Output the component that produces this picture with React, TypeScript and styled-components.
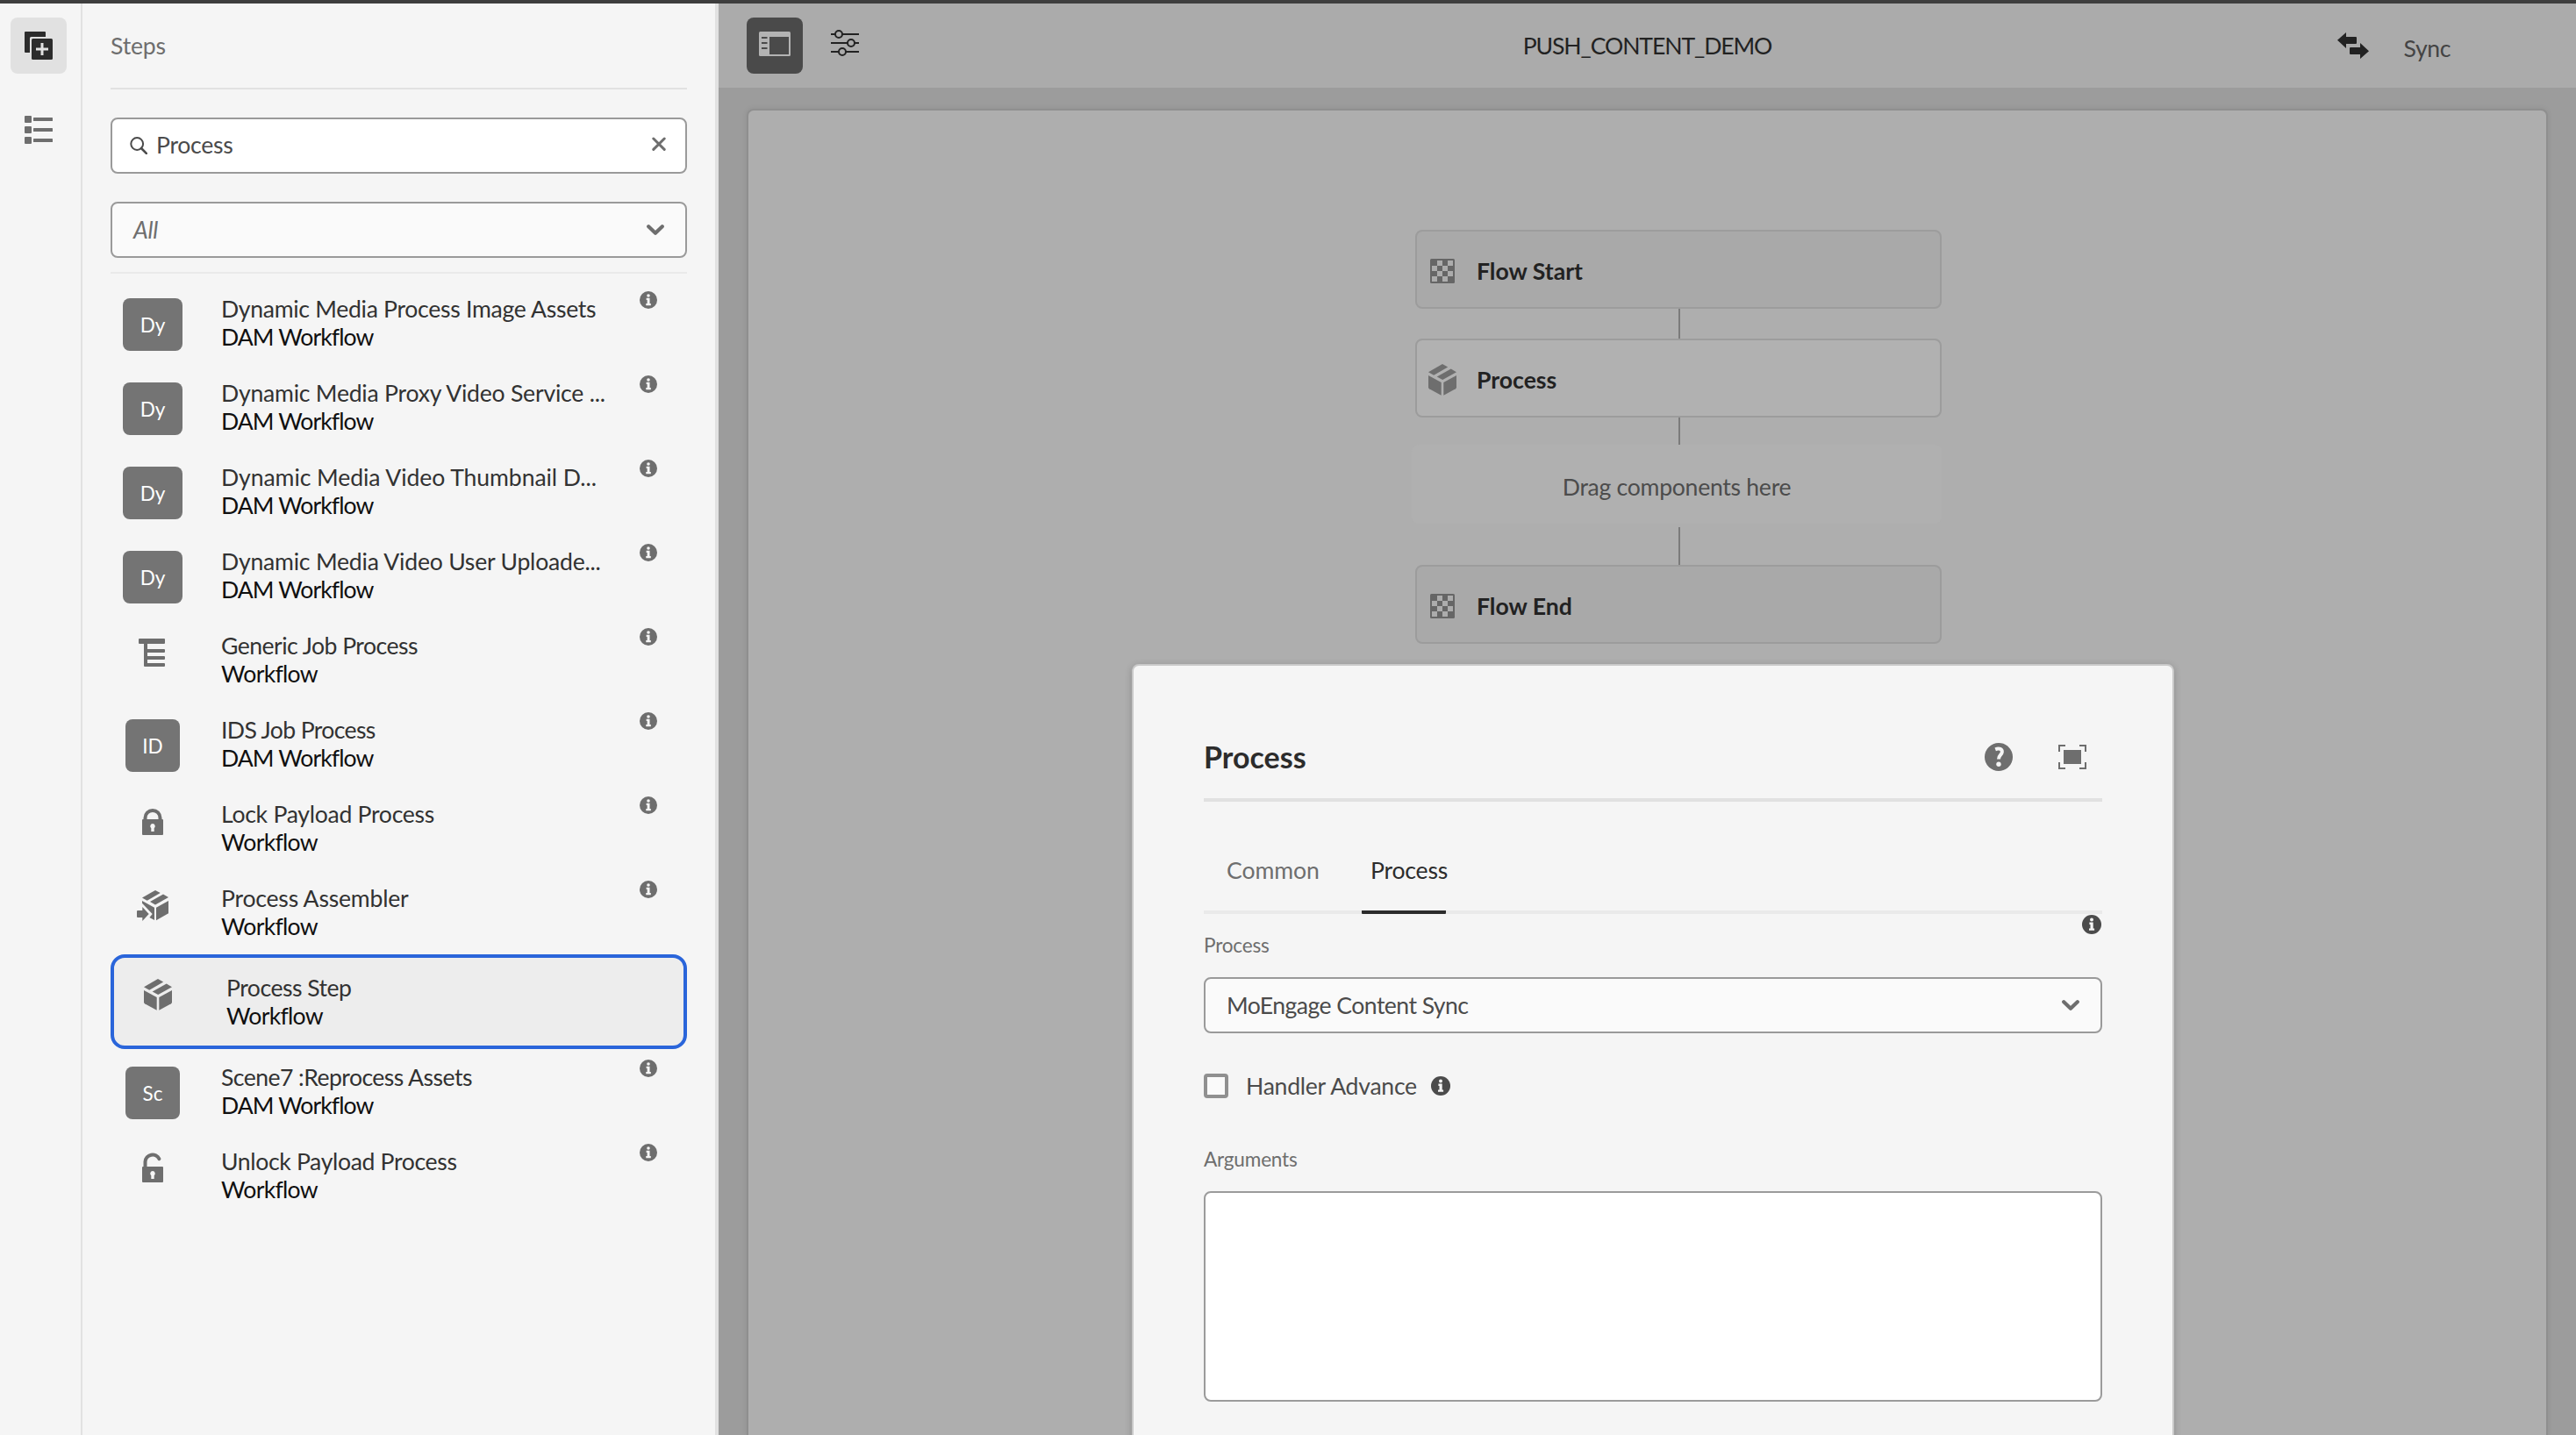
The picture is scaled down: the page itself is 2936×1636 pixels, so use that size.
import React from "react";
import styled, { createGlobalStyle, css } from "styled-components";

const GlobalStyle = createGlobalStyle`
  *, *::before, *::after { box-sizing: border-box; }
  html, body { margin: 0; padding: 0; }
  body {
    width: 2936px;
    height: 1636px;
    overflow: hidden;
    background: #f5f5f5;
    font-family: Lato, "Open Sans", sans-serif;
    font-size: 26.6px;
    line-height: 32px;
    color: #323232;
  }
`;

/* ---------- Shell ---------- */

const Shell = styled.div`
  position: relative;
  display: flex;
  width: 2936px;
  height: 1636px;
  overflow: hidden;
  border-top: 4px solid #3e3e3e;
  background: #f5f5f5;
`;

const Label = styled.span<{ $track?: number }>`
  white-space: nowrap;
  letter-spacing: ${(p) => p.$track ?? -0.2}px;
`;

const Icon = styled.svg`
  display: block;
  flex: none;
`;

/* ---------- Rail ---------- */

const Rail = styled.nav`
  flex: none;
  display: flex;
  flex-direction: column;
  align-items: center;
  gap: 32px;
  width: 94px;
  padding: 16px 4px 0 0;
  border-right: 2px solid #e1e1e1;
`;

const RailButton = styled.button<{ $active?: boolean }>`
  display: flex;
  align-items: center;
  justify-content: center;
  width: 64px;
  height: 64px;
  padding: 0;
  border: 0;
  border-radius: 8px;
  background: ${(p) => (p.$active ? "#e1e1e1" : "transparent")};
`;

/* ---------- Steps panel ---------- */

const Panel = styled.aside`
  flex: none;
  display: flex;
  flex-direction: column;
  width: 725px;
  padding: 0 32px 0 32px;
  border-right: 4px solid #e1e1e1;
`;

const PanelHeader = styled.header`
  display: flex;
  align-items: center;
  height: 98px;
  border-bottom: 2px solid #e1e1e1;
  color: #6e6e6e;
`;

const field = css`
  display: flex;
  align-items: center;
  height: 64px;
  border: 2px solid #9a9a9a;
  border-radius: 8px;
`;

const SearchField = styled.div`
  ${field}
  margin-top: 32px;
  padding: 0 22px 0 20px;
  background: #fff;
  color: #4b4b4b;
`;

const SearchText = styled.div`
  flex: 1;
  margin: 0 0 2px 10px;
`;

const Select = styled.div<{ $placeholder?: boolean; $top?: number }>`
  ${field}
  justify-content: space-between;
  margin-top: ${(p) => p.$top ?? 0}px;
  padding: 0 24px 0 24px;
  background: #fafafa;
  color: ${(p) => (p.$placeholder ? "#6e6e6e" : "#4b4b4b")};
  font-style: ${(p) => (p.$placeholder ? "italic" : "normal")};
`;

const StepList = styled.ul`
  margin: 16px 0 0;
  padding: 8px 0 0;
  border-top: 2px solid #eaeaea;
  list-style: none;
`;

const StepRow = styled.li<{ $selected?: boolean }>`
  display: grid;
  grid-template-columns: 96px 449px 1fr;
  column-gap: 29px;
  align-items: start;
  height: 96px;
  ${(p) =>
    p.$selected &&
    css`
      height: 108px;
      padding: 2px;
      border: 4px solid #2a65da;
      border-radius: 16px;
      background: #ededed;
    `}
`;

const StepIconSlot = styled.div<{ $top: number }>`
  display: flex;
  justify-content: center;
  padding-top: ${(p) => p.$top}px;
`;

const Avatar = styled.div<{ $width: number }>`
  display: flex;
  align-items: center;
  justify-content: center;
  width: ${(p) => p.$width}px;
  height: 60px;
  padding-top: 2px;
  border-radius: 8px;
  background: #747474;
  color: #fff;
  font-size: 22.5px;
`;

const StepText = styled.div`
  display: flex;
  flex-direction: column;
  padding: 16px 0 0 1px;
  overflow: hidden;
`;

const StepGroup = styled(Label)`
  color: #101010;
`;

const StepInfo = styled.div`
  padding-top: 12px;
`;

/* ---------- Editor ---------- */

const Editor = styled.main`
  flex: 1;
  display: flex;
  flex-direction: column;
  background: #9c9c9c;
`;

const Toolbar = styled.header`
  display: grid;
  grid-template-columns: 1fr auto 1fr;
  align-items: center;
  height: 96px;
  padding: 0 32px;
  background: #ababab;
  color: #222;
`;

const ToolbarGroup = styled.div`
  display: flex;
  align-items: center;
  gap: 32px;
`;

const ToolbarEnd = styled(ToolbarGroup)`
  justify-content: flex-end;
  gap: 40px;
  padding-right: 111px;
  color: #444;
`;

const SyncLabel = styled(Label)`
  padding-top: 6px;
`;

const PanelToggle = styled.button`
  display: flex;
  align-items: center;
  justify-content: center;
  width: 64px;
  height: 64px;
  padding: 0 0 4px;
  border: 0;
  border-radius: 8px;
  background: #4a4a4a;
`;

const SliderButton = styled.div`
  padding-bottom: 6px;
`;

const Page = styled.section`
  flex: 1;
  display: flex;
  flex-direction: column;
  align-items: center;
  margin: 24px 32px 0;
  padding: 136px 0 0 71px;
  border: 2px solid #8f8f8f;
  border-bottom: 0;
  border-radius: 8px 8px 0 0;
  background: #aeaeae;
  box-shadow: 0 0 6px rgba(0, 0, 0, 0.08);
`;

const FlowNode = styled.div<{ $raised?: boolean }>`
  flex: none;
  display: grid;
  grid-template-columns: 32px 1fr;
  column-gap: 23px;
  align-items: center;
  justify-items: center;
  width: 600px;
  height: 90px;
  padding: 3px 13px 0;
  border: 2px solid #9c9c9c;
  border-radius: 8px;
  background: ${(p) => (p.$raised ? "#b1b1b1" : "#a9a9a9")};
  color: #222;
  font-weight: 700;
`;

const FlowLabel = styled(Label)`
  justify-self: start;
`;

const Connector = styled.div<{ $length: number }>`
  flex: none;
  width: 2px;
  height: ${(p) => p.$length}px;
  margin-left: 2px;
  background: #7b7b7b;
`;

const DropZone = styled.div`
  flex: none;
  display: flex;
  align-items: center;
  justify-content: center;
  width: 604px;
  height: 90px;
  margin: 0 4px 4px 0;
  padding-top: 5px;
  border-radius: 8px;
  background: #b0b0b0;
  color: #4c4c4c;
`;

/* ---------- Dialog ---------- */

const Dialog = styled.section`
  position: absolute;
  left: 1290px;
  top: 753px;
  display: flex;
  flex-direction: column;
  width: 1188px;
  height: 960px;
  padding: 58px 80px 0;
  border: 2px solid #c9c9c9;
  border-radius: 8px;
  background: #f5f5f5;
  box-shadow: 0 2px 8px rgba(0, 0, 0, 0.2);
`;

const DialogHeader = styled.header`
  display: flex;
  align-items: center;
  justify-content: space-between;
  height: 97px;
  padding: 0 18px 1px 0;
  border-bottom: 4px solid #e1e1e1;
`;

const DialogTitle = styled.h2`
  margin: 0;
  color: #2c2c2c;
  font-size: 34px;
  font-weight: 700;
  line-height: 44px;
`;

const DialogActions = styled.div`
  display: flex;
  align-items: center;
  gap: 52px;
`;

const Tabs = styled.div`
  display: flex;
  gap: 24px;
  height: 128px;
  padding: 0 24px;
  border-bottom: 4px solid #eaeaea;
`;

const Tab = styled.div<{ $active?: boolean; $width: number }>`
  display: flex;
  align-items: flex-end;
  width: ${(p) => p.$width}px;
  height: 128px;
  padding: 0 0 ${(p) => (p.$active ? 30 : 34)}px ${(p) => (p.$active ? 10 : 2)}px;
  border-bottom: ${(p) => (p.$active ? "4px solid #2c2c2c" : "0")};
  border-radius: 1px;
  color: ${(p) => (p.$active ? "#2c2c2c" : "#6e6e6e")};
`;

const FieldHeader = styled.div`
  display: flex;
  justify-content: space-between;
  height: 72px;
  padding: 1px 1px 0 0;
`;

const FieldLabel = styled.div<{ $top: number }>`
  padding-top: ${(p) => p.$top}px;
  color: #6e6e6e;
  font-size: 22.6px;
`;

const CheckRow = styled.div`
  display: flex;
  align-items: center;
  height: 28px;
  margin-top: 46px;
  color: #4b4b4b;
`;

const Checkbox = styled.div`
  width: 28px;
  height: 28px;
  margin-right: 20px;
  border: 4px solid #909090;
  border-radius: 4px;
  background: #fafafa;
`;

const CheckInfo = styled.div`
  margin-left: 16px;
`;

const TextArea = styled.div`
  height: 240px;
  margin-top: 20px;
  border: 2px solid #9b9b9b;
  border-radius: 8px;
  background: #fff;
`;

/* ---------- Icons ---------- */

const AddStepsIcon = () => (
  <Icon width="32" height="32" viewBox="0 0 32 32">
    <path d="M1 0h22a1 1 0 0 1 1 1v5H7.5A1.5 1.5 0 0 0 6 7.5V24H1a1 1 0 0 1-1-1V1a1 1 0 0 1 1-1z" fill="#2c2c2c" />
    <rect x="8" y="8" width="24" height="24" rx="1.5" fill="#2c2c2c" />
    <path d="M20 13v14M13 20h14" stroke="#e1e1e1" strokeWidth="3" />
  </Icon>
);

const OutlineIcon = () => (
  <Icon width="32" height="32" viewBox="0 0 32 32" fill="#6e6e6e">
    {[0, 12, 24].map((y) => (
      <g key={y}>
        <rect y={y} width="8" height="8" rx="1" />
        <rect x="10" y={y + 2} width="22" height="4" rx="0.5" />
      </g>
    ))}
  </Icon>
);

const SearchIcon = () => (
  <Icon width="20" height="20" viewBox="0 0 20 20" fill="none" stroke="#4b4b4b">
    <circle cx="8.2" cy="8" r="6.9" strokeWidth="2" />
    <path d="M13 13l5.8 5.8" strokeWidth="2.6" strokeLinecap="round" />
  </Icon>
);

const ClearIcon = () => (
  <Icon width="16" height="20" viewBox="0 0 16 20" fill="none" stroke="#6e6e6e">
    <path d="M1.8 2l12.4 12.4M14.2 2L1.8 14.4" strokeWidth="3" strokeLinecap="round" />
  </Icon>
);

const ChevronIcon = () => (
  <Icon width="20" height="14" viewBox="0 0 20 14" fill="none" stroke="#6e6e6e">
    <path d="M2.2 3.2l7.8 7.6 7.8-7.6" strokeWidth="4.2" strokeLinecap="round" strokeLinejoin="round" />
  </Icon>
);

const InfoIcon = ({ size, color }: { size: number; color: string }) => (
  <Icon width={size} height={size} viewBox="0 0 22 22">
    <circle cx="11" cy="11" r="11" fill={color} />
    <circle cx="11" cy="5.5" r="2" fill="#f5f5f5" />
    <path d="M8.4 8.6h4.3v6.9h1.4v2.3H8v-2.3h1.5v-4.6H8.4z" fill="#f5f5f5" />
  </Icon>
);

const TreeIcon = () => (
  <Icon width="36" height="36" viewBox="0 0 36 36" fill="#6e6e6e">
    <rect x="2" y="2" width="30" height="6" rx="1" />
    <path d="M8 6h4v8h19a1 1 0 0 1 1 1v2a1 1 0 0 1-1 1H12v4h19a1 1 0 0 1 1 1v2a1 1 0 0 1-1 1H12v4h19a1 1 0 0 1 1 1v2a1 1 0 0 1-1 1H9a1 1 0 0 1-1-1z" />
  </Icon>
);

const LockIcon = ({ open }: { open?: boolean }) => (
  <Icon width="36" height="36" viewBox="0 0 36 36">
    <path
      d={open ? "M9.5 17v-6.6a8.4 8.4 0 0 1 15.9-3.2" : "M9.5 17v-2.6a8.5 8.5 0 0 1 17 0V17"}
      fill="none"
      stroke="#6e6e6e"
      strokeWidth="4"
      strokeLinecap={open ? "round" : "butt"}
    />
    <rect x="6" y="16" width="24" height="18" rx="1" fill="#6e6e6e" />
    <path d="M18 21a3 3 0 0 1 1.7 5.3V30h-3.4v-3.7A3 3 0 0 1 18 21z" fill="#f5f5f5" />
  </Icon>
);

const BoxIcon = () => (
  <Icon width="36" height="36" viewBox="0 0 36 36" fill="#6e6e6e">
    <path d="M2 13l14.7 8v14.7L3 28.3a2 2 0 0 1-1-1.7z" />
    <path d="M34 13l-14.7 8v14.7L33 28.3a2 2 0 0 0 1-1.7z" />
    <path d="M2 9.2L18 0l6.2 3.6-16 9.2z" />
    <path d="M11.7 14.6l16-9 6.3 3.7L18.2 18z" />
  </Icon>
);

const AssemblerIcon = () => (
  <Icon width="36" height="36" viewBox="0 0 36 36" fill="#6e6e6e">
    <path d="M6 9.5L21 .9l5.7 3.1-15 8.7z" />
    <path d="M15 13.9l15-8.3L36 9l-15 8.4z" />
    <path d="M22 20.7L36 13v14.3l-14 8z" />
    <path d="M6 13l14 7.7V35l-5.6-3 3.3-4L6 15.8z" />
    <path d="M1 24h5.3v-4l7.4 8-7.4 8v-4H1a1 1 0 0 1-1-1v-6a1 1 0 0 1 1-1z" />
  </Icon>
);

const CheckerIcon = () => (
  <Icon width="28" height="28" viewBox="0 0 28 28">
    <rect width="28" height="28" rx="1.5" fill="#666" />
    {[0, 1, 2, 3].map((row) =>
      [0, 1].map((col) => (
        <rect key={`${row}-${col}`} x={2 + col * 12 + (row % 2 ? 0 : 6)} y={2 + row * 6} width="6" height="6" fill="#acacac" />
      ))
    )}
  </Icon>
);

const RailViewIcon = () => (
  <Icon width="36" height="28" viewBox="0 0 36 28">
    <rect width="36" height="28" rx="1.5" fill="#b3b3b3" />
    <rect x="12" y="6" width="22" height="20" fill="#4a4a4a" />
    <path d="M3 7h6.5M3 13h6.5M3 19h6.5" stroke="#4a4a4a" strokeWidth="2" />
  </Icon>
);

const SlidersIcon = () => (
  <Icon width="32" height="30" viewBox="0 0 32 30" fill="none" stroke="#222" strokeWidth="2">
    <path d="M0 5h5M13 5h19M0 15h19M27 15h5M0 25h9M17 25h15" />
    <circle cx="9" cy="5" r="4" />
    <circle cx="23" cy="15" r="4" />
    <circle cx="13" cy="25" r="4" />
  </Icon>
);

const SyncIcon = () => (
  <Icon width="36" height="30" viewBox="0 0 36 30" fill="#222">
    <path d="M10 0v5h11a1 1 0 0 1 1 1v6a1 1 0 0 1-1 1H10v5L0 8.8z" />
    <path d="M26 12v5H15a1 1 0 0 0-1 1v6a1 1 0 0 0 1 1h11v5l10-8.8z" />
  </Icon>
);

const HelpIcon = () => (
  <Icon width="32" height="32" viewBox="0 0 32 32">
    <circle cx="16" cy="16" r="16" fill="#6e6e6e" />
    <path d="M12.2 7.3c4.6-1.8 8-.2 7.6 3.2-.4 3.2-3.9 3.6-3.8 8" fill="none" stroke="#f5f5f5" strokeWidth="4" />
    <circle cx="16" cy="24.2" r="2.7" fill="#f5f5f5" />
  </Icon>
);

const FullScreenIcon = () => (
  <Icon width="32" height="28" viewBox="0 0 32 28">
    <rect x="6" y="6" width="20" height="16" fill="#6e6e6e" />
    <path d="M8 1H1v7M24 1h7v7M8 27H1v-7M24 27h7v-7" fill="none" stroke="#6e6e6e" strokeWidth="2" />
  </Icon>
);

/* ---------- Data ---------- */

type Step = {
  title: string;
  group: "DAM Workflow" | "Workflow";
  track: number;
  avatar?: string;
  icon?: React.ReactNode;
  selected?: boolean;
};

const steps: Step[] = [
  { title: "Dynamic Media Process Image Assets", group: "DAM Workflow", track: -0.3, avatar: "Dy" },
  { title: "Dynamic Media Proxy Video Service ...", group: "DAM Workflow", track: -0.23, avatar: "Dy" },
  { title: "Dynamic Media Video Thumbnail D...", group: "DAM Workflow", track: -0.08, avatar: "Dy" },
  { title: "Dynamic Media Video User Uploade...", group: "DAM Workflow", track: -0.22, avatar: "Dy" },
  { title: "Generic Job Process", group: "Workflow", track: -0.53, icon: <TreeIcon /> },
  { title: "IDS Job Process", group: "DAM Workflow", track: -0.63, avatar: "ID" },
  { title: "Lock Payload Process", group: "Workflow", track: -0.28, icon: <LockIcon /> },
  { title: "Process Assembler", group: "Workflow", track: -0.22, icon: <AssemblerIcon /> },
  { title: "Process Step", group: "Workflow", track: -0.5, icon: <BoxIcon />, selected: true },
  { title: "Scene7 :Reprocess Assets", group: "DAM Workflow", track: -0.55, avatar: "Sc" },
  { title: "Unlock Payload Process", group: "Workflow", track: -0.35, icon: <LockIcon open /> },
];

/* ---------- App ---------- */

export default function App() {
  return (
    <>
      <GlobalStyle />
      <Shell>
        <Rail>
          <RailButton $active aria-label="Steps">
            <AddStepsIcon />
          </RailButton>
          <RailButton aria-label="Outline">
            <OutlineIcon />
          </RailButton>
        </Rail>

        <Panel>
          <PanelHeader>
            <Label>Steps</Label>
          </PanelHeader>
          <SearchField>
            <SearchIcon />
            <SearchText>
              <Label $track={-0.3}>Process</Label>
            </SearchText>
            <ClearIcon />
          </SearchField>
          <Select $placeholder $top={32}>
            <Label>All</Label>
            <ChevronIcon />
          </Select>
          <StepList>
            {steps.map((s) => (
              <StepRow key={s.title} $selected={s.selected}>
                <StepIconSlot $top={s.avatar ? 20 : 22}>
                  {s.avatar ? <Avatar $width={s.avatar === "Dy" ? 68 : 62}>{s.avatar}</Avatar> : s.icon}
                </StepIconSlot>
                <StepText>
                  <Label $track={s.track}>{s.title}</Label>
                  <StepGroup $track={s.group === "Workflow" ? -0.72 : -0.92}>{s.group}</StepGroup>
                </StepText>
                {!s.selected && (
                  <StepInfo>
                    <InfoIcon size={20} color="#6e6e6e" />
                  </StepInfo>
                )}
              </StepRow>
            ))}
          </StepList>
        </Panel>

        <Editor>
          <Toolbar>
            <ToolbarGroup>
              <PanelToggle aria-label="Toggle side panel">
                <RailViewIcon />
              </PanelToggle>
              <SliderButton>
                <SlidersIcon />
              </SliderButton>
            </ToolbarGroup>
            <Label $track={-1.1}>PUSH_CONTENT_DEMO</Label>
            <ToolbarEnd>
              <SyncIcon />
              <SyncLabel $track={-0.4}>Sync</SyncLabel>
            </ToolbarEnd>
          </Toolbar>
          <Page>
            <FlowNode>
              <CheckerIcon />
              <FlowLabel $track={0}>Flow Start</FlowLabel>
            </FlowNode>
            <Connector $length={34} />
            <FlowNode $raised>
              <BoxIcon />
              <FlowLabel $track={0}>Process</FlowLabel>
            </FlowNode>
            <Connector $length={31} />
            <DropZone>
              <Label $track={-0.28}>Drag components here</Label>
            </DropZone>
            <Connector $length={43} />
            <FlowNode>
              <CheckerIcon />
              <FlowLabel $track={0}>Flow End</FlowLabel>
            </FlowNode>
          </Page>
        </Editor>

        <Dialog role="dialog">
          <DialogHeader>
            <DialogTitle>Process</DialogTitle>
            <DialogActions>
              <HelpIcon />
              <FullScreenIcon />
            </DialogActions>
          </DialogHeader>
          <Tabs>
            <Tab $width={132}>
              <Label $track={-0.1}>Common</Label>
            </Tab>
            <Tab $active $width={96}>
              <Label>Process</Label>
            </Tab>
          </Tabs>
          <FieldHeader>
            <FieldLabel $top={19}>
              <Label>Process</Label>
            </FieldLabel>
            <InfoIcon size={22} color="#4b4b4b" />
          </FieldHeader>
          <Select>
            <Label $track={-0.55}>MoEngage Content Sync</Label>
            <ChevronIcon />
          </Select>
          <CheckRow>
            <Checkbox />
            <Label $track={-0.26}>Handler Advance</Label>
            <CheckInfo>
              <InfoIcon size={22} color="#4b4b4b" />
            </CheckInfo>
          </CheckRow>
          <FieldLabel $top={54}>
            <Label>Arguments</Label>
          </FieldLabel>
          <TextArea />
        </Dialog>
      </Shell>
    </>
  );
}
